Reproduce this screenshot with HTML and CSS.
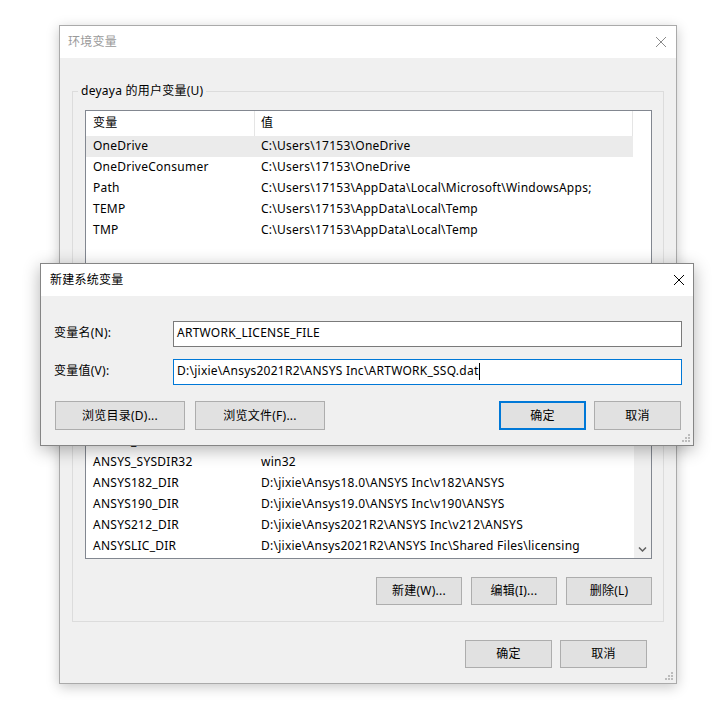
FILE: index.html
```html
<!DOCTYPE html>
<html lang="zh-CN">
<head>
  <meta charset="UTF-8">
  <title>环境变量</title>
  <link rel="stylesheet" href="styles.css">
</head>
<body>
<div class="desktop">

  <!-- 环境变量 (inactive, behind) -->
  <div class="window env-window">
    <div class="titlebar">
      <span class="title">环境变量</span>
      <svg class="close-icon" viewBox="0 0 10 10" width="10" height="10">
        <path d="M0 0L10 10M10 0L0 10" />
      </svg>
    </div>

    <div class="window-body">
      <fieldset class="group user-group">
        <legend>deyaya 的用户变量(U)</legend>
        <div class="list user-list">
          <div class="list-content">
            <div class="list-header">
              <span class="col-name">变量</span>
              <span class="col-value">值</span>
            </div>
            <div class="row selected"><span class="col-name">OneDrive</span><span class="col-value">C:\Users\17153\OneDrive</span></div>
            <div class="row"><span class="col-name">OneDriveConsumer</span><span class="col-value">C:\Users\17153\OneDrive</span></div>
            <div class="row"><span class="col-name">Path</span><span class="col-value">C:\Users\17153\AppData\Local\Microsoft\WindowsApps;</span></div>
            <div class="row"><span class="col-name">TEMP</span><span class="col-value">C:\Users\17153\AppData\Local\Temp</span></div>
            <div class="row"><span class="col-name">TMP</span><span class="col-value">C:\Users\17153\AppData\Local\Temp</span></div>
          </div>
        </div>
        <div class="button-row">
          <button class="btn">新建(N)...</button>
          <button class="btn">编辑(E)...</button>
          <button class="btn">删除(D)</button>
        </div>
      </fieldset>

      <fieldset class="group system-group">
        <legend>系统变量(S)</legend>
        <div class="list system-list">
          <div class="list-content">
            <div class="list-header">
              <span class="col-name">变量</span>
              <span class="col-value">值</span>
            </div>
            <div class="row"><span class="col-name">ANSYSLMD_LICENSE_FILE</span><span class="col-value">1055@localhost</span></div>
            <div class="row"><span class="col-name">ANSYS_PLATFORM</span><span class="col-value">winx64</span></div>
            <div class="row"><span class="col-name">ANSYS_SYSDIR</span><span class="col-value">winx64</span></div>
            <div class="row"><span class="col-name">ANSYS_SYSDIR32</span><span class="col-value">win32</span></div>
            <div class="row"><span class="col-name">ANSYS182_DIR</span><span class="col-value">D:\jixie\Ansys18.0\ANSYS Inc\v182\ANSYS</span></div>
            <div class="row"><span class="col-name">ANSYS190_DIR</span><span class="col-value">D:\jixie\Ansys19.0\ANSYS Inc\v190\ANSYS</span></div>
            <div class="row"><span class="col-name">ANSYS212_DIR</span><span class="col-value">D:\jixie\Ansys2021R2\ANSYS Inc\v212\ANSYS</span></div>
            <div class="row"><span class="col-name">ANSYSLIC_DIR</span><span class="col-value">D:\jixie\Ansys2021R2\ANSYS Inc\Shared Files\licensing</span></div>
          </div>
          <div class="scrollbar">
            <div class="scroll-arrow">
              <svg viewBox="0 0 9 5" width="9" height="5"><path d="M1 4.5L4.5 1L8 4.5" /></svg>
            </div>
            <div class="scroll-thumb"></div>
            <div class="scroll-arrow">
              <svg viewBox="0 0 9 5" width="9" height="5"><path d="M1 0.5L4.5 4L8 0.5" /></svg>
            </div>
          </div>
        </div>
        <div class="button-row">
          <button class="btn">新建(W)...</button>
          <button class="btn">编辑(I)...</button>
          <button class="btn">删除(L)</button>
        </div>
      </fieldset>

      <div class="window-actions">
        <button class="btn">确定</button>
        <button class="btn">取消</button>
      </div>
    </div>

    <svg class="grip" viewBox="0 0 8 8" width="8" height="8">
      <rect x="6" y="0" width="2" height="2" /><rect x="3" y="3" width="2" height="2" /><rect x="6" y="3" width="2" height="2" />
      <rect x="0" y="6" width="2" height="2" /><rect x="3" y="6" width="2" height="2" /><rect x="6" y="6" width="2" height="2" />
    </svg>
  </div>

  <!-- 新建系统变量 (active dialog) -->
  <div class="window new-var-dialog">
    <div class="titlebar">
      <span class="title">新建系统变量</span>
      <svg class="close-icon" viewBox="0 0 10 10" width="10" height="10">
        <path d="M0 0L10 10M10 0L0 10" />
      </svg>
    </div>

    <div class="dialog-form">
      <label>变量名(N):</label>
      <div class="field">ARTWORK_LICENSE_FILE</div>
      <label>变量值(V):</label>
      <div class="field focused">D:\jixie\Ansys2021R2\ANSYS Inc\ARTWORK_SSQ.dat<span class="caret"></span></div>
    </div>

    <div class="dialog-actions">
      <button class="btn browse">浏览目录(D)...</button>
      <button class="btn browse">浏览文件(F)...</button>
      <button class="btn default">确定</button>
      <button class="btn">取消</button>
    </div>

    <svg class="grip" viewBox="0 0 8 8" width="8" height="8">
      <rect x="6" y="0" width="2" height="2" /><rect x="3" y="3" width="2" height="2" /><rect x="6" y="3" width="2" height="2" />
      <rect x="0" y="6" width="2" height="2" /><rect x="3" y="6" width="2" height="2" /><rect x="6" y="6" width="2" height="2" />
    </svg>
  </div>

</div>
</body>
</html>
```

FILE: styles.css
```css
/* General */
body {
  margin: 0;
  background-color: #ffffff;
  font-family: "Noto Sans", "Noto Sans CJK SC", sans-serif;
  font-size: 12px;
  letter-spacing: 0.25px;
  color: #000;
}

.desktop {
  position: relative;
  box-sizing: border-box;
  width: 728px;
  height: 714px;
  padding: 25px 0 0 59px;
}

/* Window frame */
.window {
  position: relative;
  box-sizing: border-box;
  display: flex;
  flex-direction: column;
  background-color: #f0f0f0;
}

.titlebar {
  flex: none;
  height: 31px;
  display: flex;
  align-items: center;
  justify-content: space-between;
  background-color: #fff;
  line-height: 16px;
}

.close-icon path {
  fill: none;
  stroke: #000;
  stroke-width: 1;
}

.grip {
  position: absolute;
  right: 3px;
  bottom: 3px;
  fill: #bcbcbc;
}

/* Buttons */
.btn {
  box-sizing: border-box;
  width: 86px;
  height: 28px;
  padding: 0 0 2px;
  border: 1px solid #adadad;
  background-color: #e1e1e1;
  font: inherit;
  letter-spacing: inherit;
  color: #000;
}
.btn.default {
  border: 2px solid #0078d7;
}

/* 环境变量 */
.env-window {
  width: 618px;
  height: 659px;
  border: 1px solid #aaaaaa;
  box-shadow: 0 3px 12px rgba(0, 0, 0, 0.22);
}
.env-window .titlebar {
  padding: 0 10px 1px 8px;
}
.env-window .title {
  color: #9a9a9a;
}
.env-window .close-icon path {
  stroke: #8a8a8a;
}

.window-body {
  display: flex;
  flex-direction: column;
  padding: 25px 12px 0;
}

.group {
  margin: 0;
  padding: 11px 11px 17px 12px;
  border: 1px solid #dcdcdc;
  min-width: 0;
}
.group legend {
  margin-left: -7px;
  padding: 0 3px;
  line-height: 16px;
}
.system-group {
  margin-top: 6px;
  padding-bottom: 16px;
}

.button-row {
  display: flex;
  justify-content: flex-end;
  gap: 9px;
  margin-top: 18px;
}
.user-group .button-row {
  margin-top: 17px;
}

.window-actions {
  display: flex;
  justify-content: flex-end;
  gap: 8px;
  margin-top: 18px;
  padding-right: 17px;
}
.window-actions .btn {
  width: 87px;
}

/* List view */
.list {
  box-sizing: border-box;
  display: flex;
  border: 1px solid #828790;
  background-color: #fff;
  overflow: hidden;
}
.user-list {
  height: 157px;
}
.system-list {
  height: 196px;
}

.list-content {
  flex: none;
  width: 547px;
}

.list-header,
.row {
  display: flex;
  white-space: nowrap;
}
.list-header {
  height: 25px;
  line-height: 23px;
}
.row {
  height: 21px;
  line-height: 19px;
}
.row.selected {
  background-color: #ebebeb;
}

.col-name {
  box-sizing: border-box;
  flex: none;
  width: 169px;
  padding-left: 7px;
}
.col-value {
  flex: 1;
  padding-left: 6px;
}
.list-header .col-name,
.list-header .col-value {
  height: 25px;
  box-sizing: border-box;
  border-right: 1px solid #e5e5e5;
}

.scrollbar {
  flex: none;
  width: 17px;
  margin-left: auto;
  display: flex;
  flex-direction: column;
  background-color: #f0f0f0;
}
.scroll-arrow {
  height: 17px;
  display: flex;
  align-items: center;
  justify-content: center;
}
.scroll-arrow path {
  fill: none;
  stroke: #606060;
  stroke-width: 1.5;
}
.scroll-thumb {
  height: 60px;
  margin: 0 1px;
  background-color: #cdcdcd;
}
.scroll-thumb + .scroll-arrow {
  margin-top: auto;
}

/* 新建系统变量 */
.new-var-dialog {
  position: absolute;
  left: 40px;
  top: 263px;
  width: 654px;
  height: 183px;
  border: 1px solid #858585;
  box-shadow: 0 4px 16px rgba(0, 0, 0, 0.3);
}
.new-var-dialog .titlebar {
  padding: 0 9px 1px 9px;
}

.dialog-form {
  display: grid;
  grid-template-columns: 119px 1fr;
  row-gap: 12px;
  align-items: center;
  padding: 25px 11px 0 13px;
}
.dialog-form label {
  line-height: 16px;
  padding-bottom: 2px;
}

.field {
  box-sizing: border-box;
  height: 26px;
  padding-left: 3px;
  border: 1px solid #7a7a7a;
  background-color: #fff;
  line-height: 22px;
  white-space: nowrap;
}
.field.focused {
  border-color: #0078d7;
}
.caret {
  display: inline-block;
  width: 1px;
  height: 17px;
  vertical-align: middle;
  background-color: #000;
}

.dialog-actions {
  display: flex;
  gap: 10px;
  margin: 16px 12px 0 14px;
}
.dialog-actions .btn {
  height: 29px;
}
.dialog-actions .browse {
  width: 130px;
}
.dialog-actions .default {
  width: 87px;
  margin-left: auto;
  margin-right: -2px;
}
.dialog-actions .default + .btn {
  width: 87px;
}
```
